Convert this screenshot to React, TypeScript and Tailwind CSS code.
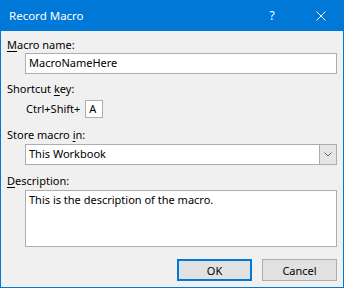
import React from "react";

const font = { fontFamily: '"Segoe UI", "Noto Sans", sans-serif' };

const App: React.FC = () => {
  return (
    <div
      className="w-[344px] h-[288px] bg-[#0078d7] flex flex-col px-px pb-px text-[11px] text-black"
      style={font}
    >
      {/* title bar */}
      <div className="h-[31px] flex items-center text-white">
        <span className="pl-[8px] text-[11.5px] leading-none">Record Macro</span>
        <span className="ml-auto w-[20px] text-center text-[12px] leading-none mr-[34px]">?</span>
        <svg width="10" height="10" viewBox="0 0 10 10" className="mr-[17px]">
          <path d="M0.5 0.5 L9.5 9.5 M9.5 0.5 L0.5 9.5" stroke="white" strokeWidth="1" />
        </svg>
      </div>

      {/* body */}
      <div className="flex-1 bg-[#f0f0f0] flex flex-col pl-[6px] pr-[6px] pt-[6px]">
        <label className="leading-[16px]">
          <span className="underline underline-offset-2">M</span>acro name:
        </label>
        <div className="ml-[18px] h-[21px] border border-[#adadad] bg-white flex items-center px-[3px]">
          MacroNameHere
        </div>

        <label className="leading-[16px] mt-[7px]">
          Shortcut <span className="underline underline-offset-2">k</span>ey:
        </label>
        <div className="ml-[19px] mt-[3px] flex items-center">
          <span className="leading-[16px]">Ctrl+Shift+</span>
          <div className="ml-[5px] w-[18px] h-[18px] border border-[#adadad] bg-white flex items-center pl-[3px]">
            A
          </div>
        </div>

        <label className="leading-[16px] mt-[9px]">
          Store macro <span className="underline underline-offset-2">i</span>n:
        </label>
        <div className="ml-[18px] mt-px h-[21px] border border-[#adadad] bg-white flex items-stretch">
          <div className="flex-1 flex items-center px-[3px]">This Workbook</div>
          <div className="w-[17px] bg-[#e5e5e5] border-l border-[#adadad] flex items-center justify-center">
            <svg width="8" height="5" viewBox="0 0 8 5">
              <path d="M0.5 0.5 L4 4 L7.5 0.5" stroke="#606060" strokeWidth="1" fill="none" />
            </svg>
          </div>
        </div>

        <label className="leading-[16px] mt-[8px]">
          <span className="underline underline-offset-2">D</span>escription:
        </label>
        <div className="ml-[18px] mt-px h-[57px] border border-[#adadad] bg-white px-[3px] pt-px leading-[16px]">
          This is the description of the macro.
        </div>

        <div className="mt-[12px] flex justify-end gap-[10px]">
          <button className="w-[75px] h-[22px] border-2 border-[#0078d7] bg-[#e1e1e1] leading-none">
            OK
          </button>
          <button className="w-[75px] h-[22px] border border-[#adadad] bg-[#e1e1e1] leading-none">
            Cancel
          </button>
        </div>
      </div>
    </div>
  );
};

export default App;
